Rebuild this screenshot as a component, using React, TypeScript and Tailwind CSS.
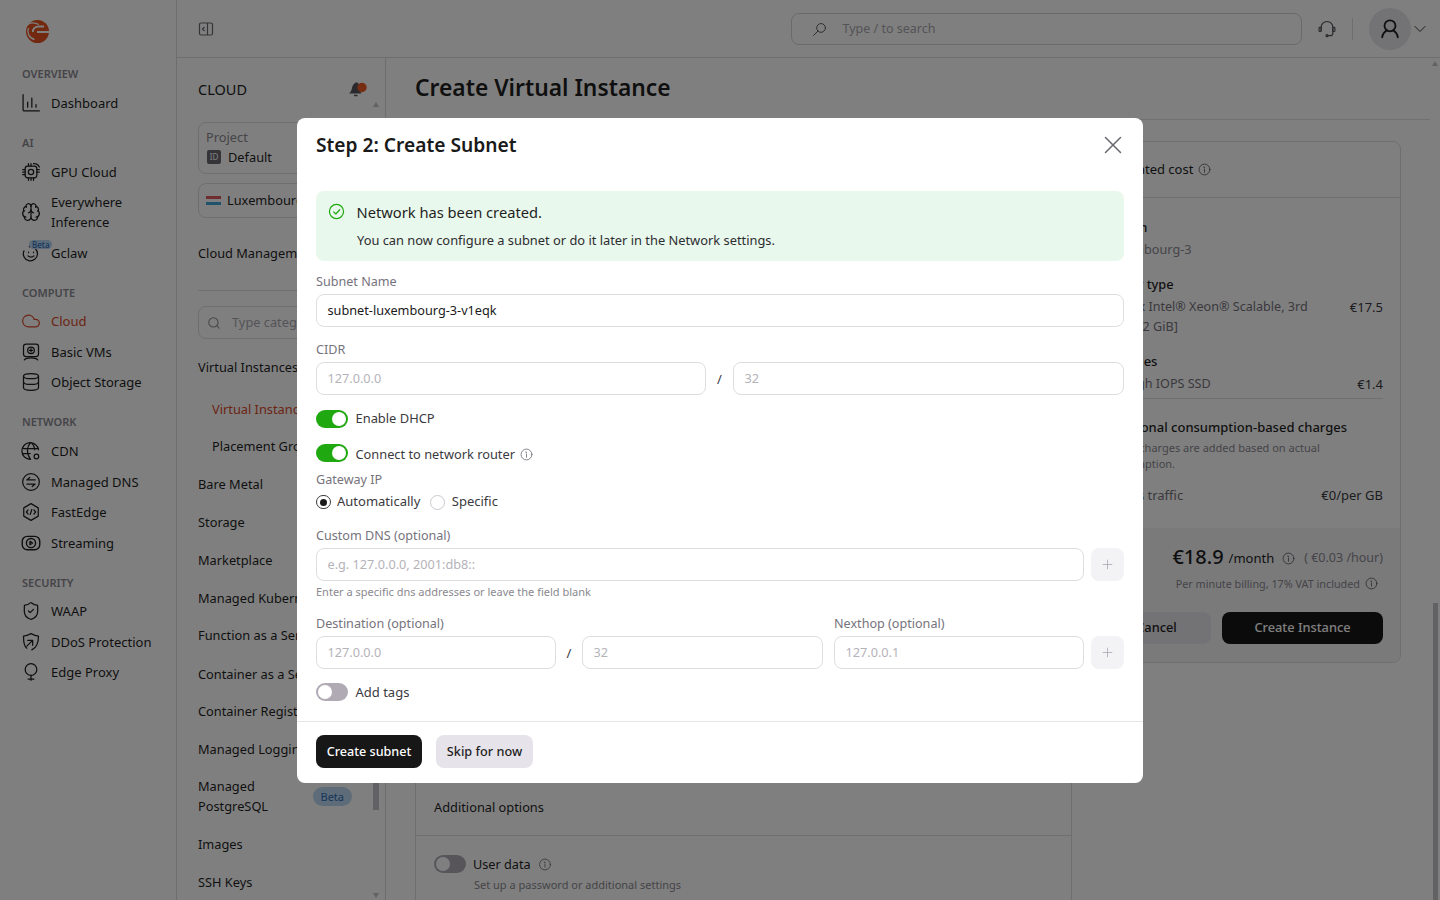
import { Brain, ChevronDown, Cloud, Database, Plus, ShieldCheck, X } from "lucide-react";
import type { ReactNode } from "react";

const Ico = ({ children, className = "w-5 h-5", sw = 1.5 }: { children: ReactNode; className?: string; sw?: number }) => (
  <svg viewBox="0 0 24 24" fill="none" stroke="currentColor" strokeWidth={sw} strokeLinecap="round" strokeLinejoin="round" className={className}>
    {children}
  </svg>
);

const InfoIcon = ({ className = "w-[13px] h-[13px]" }: { className?: string }) => (
  <Ico className={className}>
    <circle cx="12" cy="12" r="10" />
    <path d="M12 11v6M10.500 7.500h1.500v1" />
  </Ico>
);

const Logo = () => (
  <svg viewBox="0 0 24 25" className="w-6 h-[25px]">
    <circle cx="12.500" cy="12.500" r="11.500" fill="#e5521f" />
    <path d="M1 7.500C4 3.500 9 3 14 5.500" fill="none" stroke="#ffffff" strokeWidth="1.300" />
    <path d="M3.500 9C1.500 13.500 4 19 9.500 20.500" fill="none" stroke="#ffffff" strokeWidth="1.300" />
    <path d="M8 13c-.5-3 2-5.500 6-5.500h5" fill="none" stroke="#ffffff" strokeWidth="2" />
    <path d="M12 13h12" stroke="#ffffff" strokeWidth="2" />
  </svg>
);

const icons: Record<string, ReactNode> = {
  Dashboard: (
    <Ico>
      <path d="M2.500 2v18a1.500 1.500 0 0 0 1.500 1.500h18M8 17v-6M13 17V6M18 17v-3" />
    </Ico>
  ),
  "GPU Cloud": (
    <Ico>
      <rect x="5" y="5" width="14" height="14" rx="3" />
      <circle cx="12" cy="12" r="3.200" />
      <path d="M2 9h3M2 12h3M2 15h3M9 19v3M12 19v3M15 19v3M9 5V2M12 5V2M19 9h3M19 12h3M15 2a7 7 0 0 1 7 4" />
    </Ico>
  ),
  "Everywhere Inference": <Brain className="w-5 h-5" strokeWidth={1.5} />,
  Gclaw: (
    <Ico>
      <path d="M10 4.500a8.500 8.500 0 1 1-6.500 5M10 4.500c0-1.500.5-2.500 2-3" />
      <path d="M8.500 15.500c1.800 2 5.200 2 7 0M9 11v.5M15 11v.5" />
    </Ico>
  ),
  Cloud: <Cloud className="w-5 h-5" strokeWidth={1.5} />,
  "Basic VMs": (
    <Ico>
      <rect x="3" y="2.500" width="18" height="15" rx="3" />
      <circle cx="12" cy="10" r="4" />
      <path d="M12 8v4M10 10h4M4 21.500c1.500-2 3.500-2.500 8-2.500s6.500.5 8 2.500" />
    </Ico>
  ),
  "Object Storage": <Database className="w-5 h-5" strokeWidth={1.5} />,
  CDN: (
    <Ico>
      <path d="M21 10.500A10 10 0 1 0 11 22M3 9h18M2.500 15H11M11.500 2c-5 5.500-5 14 0 20M12.500 2c2.500 2.500 3.800 5.500 4 8.500" />
      <circle cx="18.500" cy="18.500" r="2.800" />
    </Ico>
  ),
  "Managed DNS": (
    <Ico>
      <circle cx="12" cy="12" r="10" />
      <path d="M17 9.500H7l3.500-3M7 14.500h10l-3.500 3" />
    </Ico>
  ),
  FastEdge: (
    <Ico>
      <path d="M12 2l8.700 5v10L12 22l-8.700-5V7z" />
      <path d="M8.500 9.500 6.500 12l2 2.500M15.500 9.500l2 2.500-2 2.500M13 9l-2 6" />
    </Ico>
  ),
  Streaming: (
    <Ico sw={1.700}>
      <rect x="1.500" y="4" width="21" height="16" rx="6" />
      <circle cx="12" cy="12" r="5.500" />
      <path d="M10.800 10l3 2-3 2z" />
    </Ico>
  ),
  WAAP: <ShieldCheck className="w-5 h-5" strokeWidth={1.5} />,
  "DDoS Protection": (
    <Ico>
      <path d="M7 19.500C4 17.500 3 14 3 5c4-.5 6-1.500 9-3 3 1.500 5 2.500 9 3 0 9-2 13.500-8 16.500" />
      <path d="M7 17l7-7M8 10h6v6" />
    </Ico>
  ),
  "Edge Proxy": (
    <Ico>
      <circle cx="12" cy="9" r="7" />
      <path d="M12 16v6M8.500 20.500h7" />
    </Ico>
  ),
};

const navSections = [
  { label: "OVERVIEW", items: ["Dashboard"] },
  { label: "AI", items: ["GPU Cloud", "Everywhere Inference", "Gclaw"] },
  { label: "COMPUTE", items: ["Cloud", "Basic VMs", "Object Storage"] },
  { label: "NETWORK", items: ["CDN", "Managed DNS", "FastEdge", "Streaming"] },
  { label: "SECURITY", items: ["WAAP", "DDoS Protection", "Edge Proxy"] },
];

const Toggle = ({ on = false }: { on?: boolean }) => (
  <span className={`flex w-8 h-[18px] shrink-0 items-center rounded-full px-[2px] ${on ? "justify-end bg-[#1fa80f]" : "bg-[#b0aab5]"}`}>
    <span className="w-[14px] h-[14px] rounded-full bg-white" />
  </span>
);

const Field = ({ value, placeholder, low = false, className = "" }: { value?: string; placeholder?: string; low?: boolean; className?: string }) => (
  <div className={`flex h-[33px] items-center rounded-lg border border-[#dedde2] bg-white px-[10.500px] text-[12.700px] ${low ? "pt-[2px]" : "pt-px"} ${className}`}>
    {value ? <span className="text-[#1a1a1a]">{value}</span> : <span className="text-[#b5b3ba]">{placeholder}</span>}
  </div>
);

const PlusBtn = () => (
  <div className="flex w-[33px] h-[33px] shrink-0 items-center justify-center rounded-lg bg-[#f3f2f5] text-[#aaa7b1]">
    <Plus className="w-[15px] h-[15px]" strokeWidth={1.3} />
  </div>
);

const Label = ({ children }: { children: ReactNode }) => <div className="h-5 pt-px text-[12.600px] leading-5 text-[#76737c]">{children}</div>;

const cloudMenu = [
  { t: "Virtual Instances", c: "mt-0" },
  { t: "Virtual Instances", c: "mt-[22px] pl-[14px] text-[#d9492a]" },
  { t: "Placement Groups", c: "mt-[17px] pl-[14px]" },
  { t: "Bare Metal", c: "mt-[18px]" },
  { t: "Storage", c: "mt-[18px]" },
  { t: "Marketplace", c: "mt-[18px]" },
  { t: "Managed Kubernetes", c: "mt-[18px]" },
  { t: "Function as a Service", c: "mt-[17px]" },
  { t: "Container as a Service", c: "mt-[19px]" },
  { t: "Container Registry", c: "mt-[17px]" },
  { t: "Managed Logging", c: "mt-[18px]" },
];

export default function App() {
  return (
    <div className="relative flex h-screen w-full overflow-hidden bg-white font-['Noto_Sans',sans-serif] text-[13px] text-[#1f1f1f]">
      {/* main nav */}
      <aside className="w-[177px] shrink-0 border-r border-[#dcdbdf]">
        <div className="flex h-[66px] items-center pb-[4px] pl-[25px]">
          <Logo />
        </div>
        <div className="pl-[22px]">
          {navSections.map((s) => (
            <div key={s.label} className="mb-[16.750px]">
              <div className="mb-[5.500px] h-4 text-[11px] font-semibold leading-4 text-[#8b8990]">{s.label}</div>
              {s.items.map((item) => (
                <div
                  key={item}
                  className={`flex items-center gap-[11px] ${item === "Everywhere Inference" ? "h-[50.500px]" : "h-[30.500px]"} ${item === "Cloud" ? "text-[#d9492a]" : ""}`}
                >
                  <span className="relative flex w-[18px] shrink-0 justify-center">
                    <span className="-mx-px">{icons[item]}</span>
                    {item === "Gclaw" && (
                      <span className="absolute left-[7px] top-[-3px] rounded-full bg-[#b9d6f2] px-[3px] text-[8px] font-medium leading-[9px] text-[#2d6cb5]">Beta</span>
                    )}
                  </span>
                  <span className={item === "Everywhere Inference" ? "w-[90px] leading-5" : "leading-5"}>{item}</span>
                </div>
              ))}
            </div>
          ))}
        </div>
      </aside>

      <div className="flex min-w-0 flex-1 flex-col">
        {/* top bar */}
        <header className="flex h-[58px] shrink-0 items-center border-b border-[#dcdbdf] pl-[21px]">
          <svg viewBox="0 0 16 16" fill="none" stroke="currentColor" strokeWidth="1.200" className="w-4 h-4 text-[#6b6870]">
            <rect x="1.500" y="2" width="13" height="12" rx="1.500" />
            <path d="M9.500 2v12M6.500 6 4.500 8l2 2" />
          </svg>
          <div className="ml-[577px] flex h-8 w-[511px] items-center rounded-lg border border-[#d5d4d9] pl-[20px] pt-px">
            <Ico className="w-[15px] h-[15px] text-[#55535a]">
              <circle cx="14.500" cy="9.500" r="7" />
              <path d="M9.500 14.500 2.500 21.500" />
            </Ico>
            <span className="ml-[15.500px] text-[12.500px] text-[#a9a7ae]">Type / to search</span>
          </div>
          <Ico className="ml-[15px] w-[20px] h-[20px] text-[#55535a]" sw={1.400}>
            <path d="M5 14V10a7 7 0 0 1 14 0v7a3 3 0 0 1-3 3h-3" />
            <rect x="2.500" y="10" width="2.500" height="5" rx="1" />
            <rect x="19" y="10" width="2.500" height="5" rx="1" />
            <circle cx="12" cy="20" r="1.200" />
          </Ico>
          <span className="ml-[15px] h-[22px] w-px bg-[#dcdbdf]" />
          <div className="ml-[16px] flex w-[42px] h-[42px] items-center justify-center rounded-full bg-[#e6e4ea] text-[#1f1f1f]">
            <Ico className="w-[22px] h-[22px]" sw={2}>
              <circle cx="12" cy="8.500" r="6" />
              <path d="M3.500 21c.5-3.500 2.500-6 5-7.500M20.500 21c-.5-3.500-2.500-6-5-7.500" />
            </Ico>
          </div>
          <ChevronDown className="-ml-px w-5 h-5 text-[#3b3a3e]" strokeWidth={1.200} />
        </header>

        <div className="flex min-h-0 flex-1">
          {/* cloud menu */}
          <nav className="relative w-[209px] shrink-0 overflow-hidden border-r border-[#dcdbdf] pl-[21px] pr-[33px] text-[12.800px] whitespace-nowrap">
            <div className="mt-[21px] h-[20px] text-[14.500px] leading-5">CLOUD</div>
            <div className="absolute left-[170px] top-[20px]">
              <svg viewBox="0 0 20 20" className="w-5 h-5">
                <path d="M2 15.500c1.500-1 2.500-3 3-5.500.6-3 2.500-5.500 4.500-5.500s3 2 3 5.500c0 2 1 4 2 5.500z" fill="#55535a" />
                <path d="M7 17.500h3.500" stroke="#55535a" strokeWidth="1.500" />
                <circle cx="15" cy="9.500" r="4.700" fill="#ee5a24" />
              </svg>
            </div>
            <div className="mt-[23px] h-[52px] w-[230px] rounded-lg border border-[#dedde2] pl-[7px] pt-[4px]">
              <div className="leading-5 text-[#8b8990]">Project</div>
              <div className="flex items-center gap-[7px] pl-px leading-5">
                <span className="flex w-[14px] h-[14px] items-center justify-center rounded-[2px] bg-[#6b6870] text-[8px] text-white">ID</span>
                Default
              </div>
            </div>
            <div className="mt-[9px] flex h-[35px] w-[230px] items-center gap-[6px] rounded-lg border border-[#dedde2] pl-[7px]">
              <span className="flex h-[10px] w-[15px] flex-col">
                <span className="h-[3.400px] bg-[#e05a5f]" />
                <span className="h-[3.200px] bg-white" />
                <span className="h-[3.400px] bg-[#43a5d8]" />
              </span>
              Luxembourg-3
            </div>
            <div className="mt-[25px] leading-5">Cloud Management</div>
            <div className="mt-[27px] h-px w-[230px] bg-[#dedde2]" />
            <div className="mt-[15px] flex h-[33px] w-[230px] items-center gap-[11px] rounded-lg border border-[#dedde2] pl-[8px] text-[#a9a7ae]">
              <svg viewBox="0 0 24 24" fill="none" stroke="#8b8990" strokeWidth="1.800" strokeLinecap="round" className="w-[14px] h-[14px]">
                <circle cx="11" cy="11" r="8" />
                <path d="m21 21-4.300-4.300" />
              </svg>
              Type category
            </div>
            <div className="mt-[18px]">
              {cloudMenu.map((m, i) => (
                <div key={i} className={`h-5 leading-5 ${m.c}`}>
                  {m.t}
                </div>
              ))}
              <div className="mt-[17px] flex items-center justify-between leading-5">
                <span>
                  Managed
                  <br />
                  PostgreSQL
                </span>
                <span className="mt-[1px] rounded-full bg-[#bcd7f2] px-[8px] text-[11px] leading-[19px] text-[#2d6cb5]">Beta</span>
              </div>
              <div className="mt-[18px] h-5 leading-5">Images</div>
              <div className="mt-[18px] h-5 leading-5">SSH Keys</div>
            </div>
            <div className="absolute right-[6px] bottom-[90px] h-[190px] w-[6px] bg-[#c4c3c8]" />
            <div className="absolute right-[6px] top-[44px] h-0 w-0 border-x-[3.500px] border-b-[5px] border-x-transparent border-b-[#c4c3c8]" />
            <div className="absolute right-[6px] bottom-[2px] h-0 w-0 border-x-[3.500px] border-t-[5px] border-x-transparent border-t-[#c4c3c8]" />
          </nav>

          {/* page */}
          <main className="relative min-w-0 flex-1 overflow-hidden pl-[29px] pr-[10px]">
            <div className="border-b border-[#e3e2e6] pb-[15px] pt-[14px]">
              <h1 className="text-[22.800px] font-semibold leading-8">Create Virtual Instance</h1>
            </div>
            <div className="mt-[21px] flex items-start gap-[12px]">
              <div className="w-[657px] shrink-0 rounded-t-lg border border-[#dedde2] pb-[40px]">
                <div className="h-[638px]" />
                <div className="flex h-[56px] items-center border-b border-[#dedde2] pl-[18px] pt-[1px] text-[12.800px]">Additional options</div>
                <div className="pl-[18px] pt-[18px]">
                  <div className="flex h-[20px] items-center gap-[7px] text-[12.700px]">
                    <Toggle />
                    <span className="pt-[2px]">User data</span>
                    <InfoIcon className="w-[14px] h-[14px] pt-px text-[#6b6870]" />
                  </div>
                  <div className="ml-[40px] mt-[3px] text-[11px] leading-4 text-[#8b8990]">Set up a password or additional settings</div>
                </div>
              </div>

              <div className="w-[317px] shrink-0 overflow-hidden rounded-lg border border-[#dedde2]">
                <div className="flex h-[56px] items-center gap-[5px] border-b border-[#dedde2] pl-[19px]">
                  Estimated cost <InfoIcon className="w-[13px] h-[13px] text-[#55535a]" />
                </div>
                <div className="pl-[19px] pr-[17px] pt-[19px] leading-5">
                  <div className="font-medium">Region</div>
                  <div className="mt-[2px] text-[12.700px] text-[#8b8990]">Luxembourg-3</div>
                  <div className="mt-[15px] text-[12.800px] font-medium">Server type</div>
                  <div className="mt-[3px] flex justify-between">
                    <span className="text-[12.600px] text-[#76737c]">
                      vCPU x Intel® Xeon® Scalable, 3rd
                      <br />
                      vCPU [2 GiB]
                    </span>
                    <span className="text-[#3b3a3e]">€17.5</span>
                  </div>
                  <div className="mt-[14px] font-medium">Volumes</div>
                  <div className="mt-[3px] flex justify-between border-b border-[#dedde2] pb-[4px]">
                    <span className="text-[12.600px] text-[#76737c]">1 x High IOPS SSD</span>
                    <span className="text-[#3b3a3e]">€1.4</span>
                  </div>
                  <div className="mt-[18px] font-medium">Additional consumption-based charges</div>
                  <div className="mt-[3px] w-[240px] text-[11px] leading-4 text-[#8b8990]">Usage charges are added based on actual consumption.</div>
                  <div className="mt-[13px] flex justify-between pb-[23px]">
                    <span className="text-[#76737c]">Egress traffic</span>
                    <span className="text-[#3b3a3e]">€0/per GB</span>
                  </div>
                </div>
                <div className="bg-[#f5f4f7] px-[17px] pb-[18px] pt-[13px]">
                  <div className="flex h-8 items-center justify-end">
                    <span className="text-[20px] font-medium leading-8">€18.9</span>
                    <span className="ml-[5px] mt-[3px]">/month</span>
                    <InfoIcon className="ml-[8px] mt-[3px] w-[13px] h-[13px] text-[#55535a]" />
                    <span className="ml-[9px] mt-[3px] text-[12.500px] text-[#8b8990]">( €0.03 /hour)</span>
                  </div>
                  <div className="mt-[3px] flex h-4 items-center justify-end gap-[5px] pr-[5px] text-[10.800px] text-[#8b8990]">
                    Per minute billing, 17% VAT included <InfoIcon className="mb-px w-[13px] h-[13px] text-[#55535a]" />
                  </div>
                  <div className="mt-[20px] flex gap-[11px] text-[12.800px]">
                    <div className="flex h-8 flex-1 items-center justify-center rounded-lg bg-[#e6e4ea] font-medium">Cancel</div>
                    <div className="flex h-8 w-[161px] items-center justify-center rounded-lg bg-[#171717] font-medium text-white">Create Instance</div>
                  </div>
                </div>
              </div>
            </div>
            <div className="absolute right-[2px] top-[545px] h-[300px] w-[5px] bg-[#c4c3c8]" />
            <div className="absolute right-[2px] top-[3px] h-0 w-0 border-x-[3px] border-b-[5px] border-x-transparent border-b-[#c4c3c8]" />
          </main>
        </div>
      </div>

      {/* dialog */}
      <div className="absolute inset-0 flex items-center justify-center bg-black/50">
        <div className="w-[846px] rounded-lg bg-white">
          <div className="flex h-[73px] items-start justify-between px-[19px] pt-[13px]">
            <h2 className="text-[19.200px] font-semibold leading-7 text-[#1a1a1a]">Step 2: Create Subnet</h2>
            <X className="mr-[-4px] mt-[-1px] w-[30px] h-[30px] text-[#6b6870]" strokeWidth={1.200} />
          </div>

          <div className="px-[19px]">
            <div className="h-[70px] rounded-lg bg-[#e9f8ec] pl-[12px] pt-[9px]">
              <div className="flex h-[24px] items-center gap-[11.500px]">
                <Ico className="w-[17px] h-[17px] text-[#1fa80f]" sw={1.700}>
                  <circle cx="12" cy="12" r="10" />
                  <path d="M8 12.500l3 3 5.500-6" />
                </Ico>
                <span className="text-[14.700px] leading-6 text-[#1f1f1f]">Network has been created.</span>
              </div>
              <div className="ml-[29px] mt-[6px] text-[12.850px] leading-5 text-[#2d2c30]">You can now configure a subnet or do it later in the Network settings.</div>
            </div>

            <div className="mt-[10px]">
              <Label>Subnet Name</Label>
              <Field className="mt-[3px]" value="subnet-luxembourg-3-v1eqk" />
            </div>

            <div className="mt-[12px]">
              <Label>CIDR</Label>
              <div className="mt-[3px] flex items-center">
                <Field low className="w-[390px]" placeholder="127.0.0.0" />
                <span className="w-[27px] pt-[3px] text-center text-[#3b3a3e]">/</span>
                <Field low className="flex-1" placeholder="32" />
              </div>
            </div>

            <div className="mt-[15px] flex h-[18px] items-center gap-[7.500px] text-[12.900px] text-[#3b3a3e]">
              <Toggle on />
              Enable DHCP
            </div>
            <div className="mt-[16px] flex h-[18px] items-center gap-[7.500px] text-[12.800px] text-[#3b3a3e]">
              <Toggle on />
              <span className="mt-[5px]">Connect to network router</span>
              <InfoIcon className="-ml-[2px] mt-[4px] w-[13px] h-[13px] text-[#6b6870]" />
            </div>

            <div className="mt-[7px]">
              <Label>Gateway IP</Label>
              <div className="mt-[3px] flex h-5 items-center text-[#3b3a3e]">
                <span className="mt-px flex w-[14.500px] h-[14.500px] items-center justify-center rounded-full border border-[#3b3a3e]">
                  <span className="w-[7px] h-[7px] rounded-full bg-[#1a1a1a]" />
                </span>
                <span className="ml-[6.500px]">Automatically</span>
                <span className="ml-[10px] mt-px w-[15px] h-[15px] rounded-full border border-[#c9c7ce]" />
                <span className="ml-[6.500px]">Specific</span>
              </div>
            </div>

            <div className="mt-[13px]">
              <Label>Custom DNS (optional)</Label>
              <div className="mt-[3px] flex gap-[7px]">
                <Field className="flex-1" placeholder="e.g. 127.0.0.0, 2001:db8::" />
                <PlusBtn />
              </div>
              <div className="mt-[3px] text-[11px] leading-4 text-[#8b8990]">Enter a specific dns addresses or leave the field blank</div>
            </div>

            <div className="mt-[13px] flex items-end gap-[11px]">
              <div className="w-[507px] shrink-0">
                <Label>Destination (optional)</Label>
                <div className="mt-[3px] flex items-center">
                  <Field low className="w-[240px]" placeholder="127.0.0.0" />
                  <span className="w-[26px] pt-[3px] text-center text-[#3b3a3e]">/</span>
                  <Field low className="flex-1" placeholder="32" />
                </div>
              </div>
              <div className="flex-1">
                <Label>Nexthop (optional)</Label>
                <Field low className="mt-[3px]" placeholder="127.0.0.1" />
              </div>
              <div className="-ml-[4px]">
                <PlusBtn />
              </div>
            </div>

            <div className="mt-[14px] flex h-[18px] items-center gap-[7.500px] text-[#3b3a3e]">
              <Toggle />
              <span className="pt-[2px]">Add tags</span>
            </div>
          </div>

          <div className="mt-[20px] flex h-[62px] gap-[14px] border-t border-[#e6e5e9] px-[19px] pt-[13px]">
            <div className="flex h-[33px] w-[106px] items-center justify-center rounded-lg bg-[#171717] pt-[2px] text-[12.600px] font-medium text-white">Create subnet</div>
            <div className="flex h-[33px] w-[97px] items-center justify-center rounded-lg bg-[#e6e4ea] pt-px text-[12.700px] font-medium">Skip for now</div>
          </div>
        </div>
      </div>
    </div>
  );
}
